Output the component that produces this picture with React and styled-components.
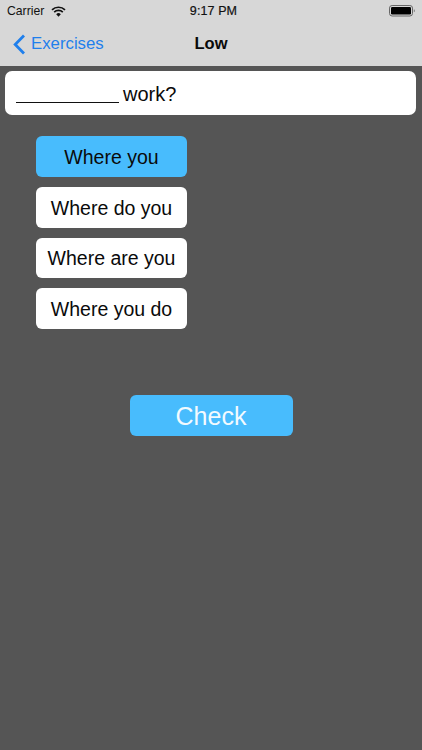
import React from "react";
import styled, { createGlobalStyle } from "styled-components";

const Global = createGlobalStyle`
  html, body { margin: 0; padding: 0; background: #555555; }
  body { font-family: "Liberation Sans", Arial, sans-serif; }
`;

const Screen = styled.div`
  width: 422px;
  height: 750px;
  overflow: hidden;
  background: #555555;
  display: flex;
  flex-direction: column;
`;

const Header = styled.header`
  height: 66px;
  background: #d7d7d7;
  display: flex;
  flex-direction: column;
  flex: none;
`;

const StatusBar = styled.div`
  height: 21px;
  box-sizing: border-box;
  display: grid;
  grid-template-columns: 1fr auto 1fr;
  align-items: center;
  padding: 1px 6px 0 7px;
  font-size: 12.2px;
  color: #111;
`;

const Carrier = styled.div`
  display: flex;
  align-items: center;
  gap: 7px;
`;

const Time = styled.div`
  font-size: 12.5px;
  letter-spacing: 0.1px;
  padding-left: 4px;
  -webkit-text-stroke: 0.2px #111;
`;

const Battery = styled.div`
  justify-self: end;
  display: flex;
  align-items: center;
`;

const NavBar = styled.nav`
  flex: 1;
  position: relative;
  display: flex;
  align-items: center;
  justify-content: center;
`;

const Back = styled.div`
  position: absolute;
  left: 13px;
  top: 1px;
  bottom: 0;
  display: flex;
  align-items: center;
  gap: 5px;
  color: #1f7fec;
  font-size: 16.8px;
`;

const Title = styled.div`
  font-weight: 700;
  font-size: 16.5px;
  color: #0a0a0a;
`;

const Body = styled.main`
  display: flex;
  flex-direction: column;
  padding: 4.5px 6px 0 5px;
`;

const Question = styled.div`
  height: 44.5px;
  box-sizing: border-box;
  padding: 3px 0 0 11px;
  background: #fff;
  border-radius: 7px;
  display: flex;
  align-items: center;
  font-size: 20px;
  color: #0a0a0a;
  gap: 4px;
`;

const Blank = styled.span`
  width: 103px;
  height: 1px;
  background: #111;
  align-self: flex-end;
  margin-bottom: 12px;
`;

const Options = styled.div`
  display: flex;
  flex-direction: column;
  gap: 10px;
  width: 151px;
  margin: 21px 0 0 31px;
`;

const Option = styled.div`
  height: 40.8px;
  box-sizing: border-box;
  padding-top: 2px;
  border-radius: 6px;
  background: ${(p) => (p.$selected ? "#48bcfd" : "#fff")};
  display: flex;
  align-items: center;
  justify-content: center;
  font-size: 19.5px;
  color: #0a0a0a;
  white-space: nowrap;
`;

const CheckButton = styled.div`
  width: 163px;
  height: 40.5px;
  box-sizing: border-box;
  padding-top: 2px;
  border-radius: 6px;
  background: #48bcfd;
  color: #f2faff;
  font-size: 25px;
  display: flex;
  align-items: center;
  justify-content: center;
  align-self: flex-start;
  margin: 66px 0 0 124.5px;
`;

const Wifi = () => (
  <svg width="15" height="11" viewBox="0 0 15 11" aria-hidden="true">
    <path d="M7.5 10.8 5.2 8.2a3.3 3.3 0 0 1 4.6 0Z" fill="#111" />
    <path d="M1 3.9a9.3 9.3 0 0 1 13 0" stroke="#111" strokeWidth="1.7" fill="none" />
    <path d="M3.2 6.2a6.2 6.2 0 0 1 8.6 0" stroke="#111" strokeWidth="1.7" fill="none" />
  </svg>
);

const BatteryIcon = () => (
  <svg width="27" height="12" viewBox="0 0 27 12" aria-hidden="true">
    <rect x="0.5" y="0.5" width="23" height="10.5" rx="2.6" fill="none" stroke="#666" strokeWidth="1" />
    <rect x="2" y="2" width="20" height="7.5" rx="1.2" fill="#000" />
    <path d="M24.8 4.2c.8.2 1.2.8 1.2 1.6s-.4 1.3-1.2 1.5Z" fill="#888" />
  </svg>
);

const Chevron = () => (
  <svg width="13" height="21" viewBox="0 0 13 21" aria-hidden="true">
    <path d="M11 1.5 2.2 10.5 11 19.5" fill="none" stroke="#1f7fec" strokeWidth="2.8" />
  </svg>
);

const options = ["Where you", "Where do you", "Where are you", "Where you do"];

export default function App() {
  return (
    <Screen>
      <Global />
      <Header>
        <StatusBar>
          <Carrier>
            Carrier
            <Wifi />
          </Carrier>
          <Time>9:17 PM</Time>
          <Battery>
            <BatteryIcon />
          </Battery>
        </StatusBar>
        <NavBar>
          <Back>
            <Chevron />
            Exercises
          </Back>
          <Title>Low</Title>
        </NavBar>
      </Header>
      <Body>
        <Question>
          <Blank />
          work?
        </Question>
        <Options>
          {options.map((o, i) => (
            <Option key={o} $selected={i === 0}>
              {o}
            </Option>
          ))}
        </Options>
        <CheckButton>Check</CheckButton>
      </Body>
    </Screen>
  );
}
